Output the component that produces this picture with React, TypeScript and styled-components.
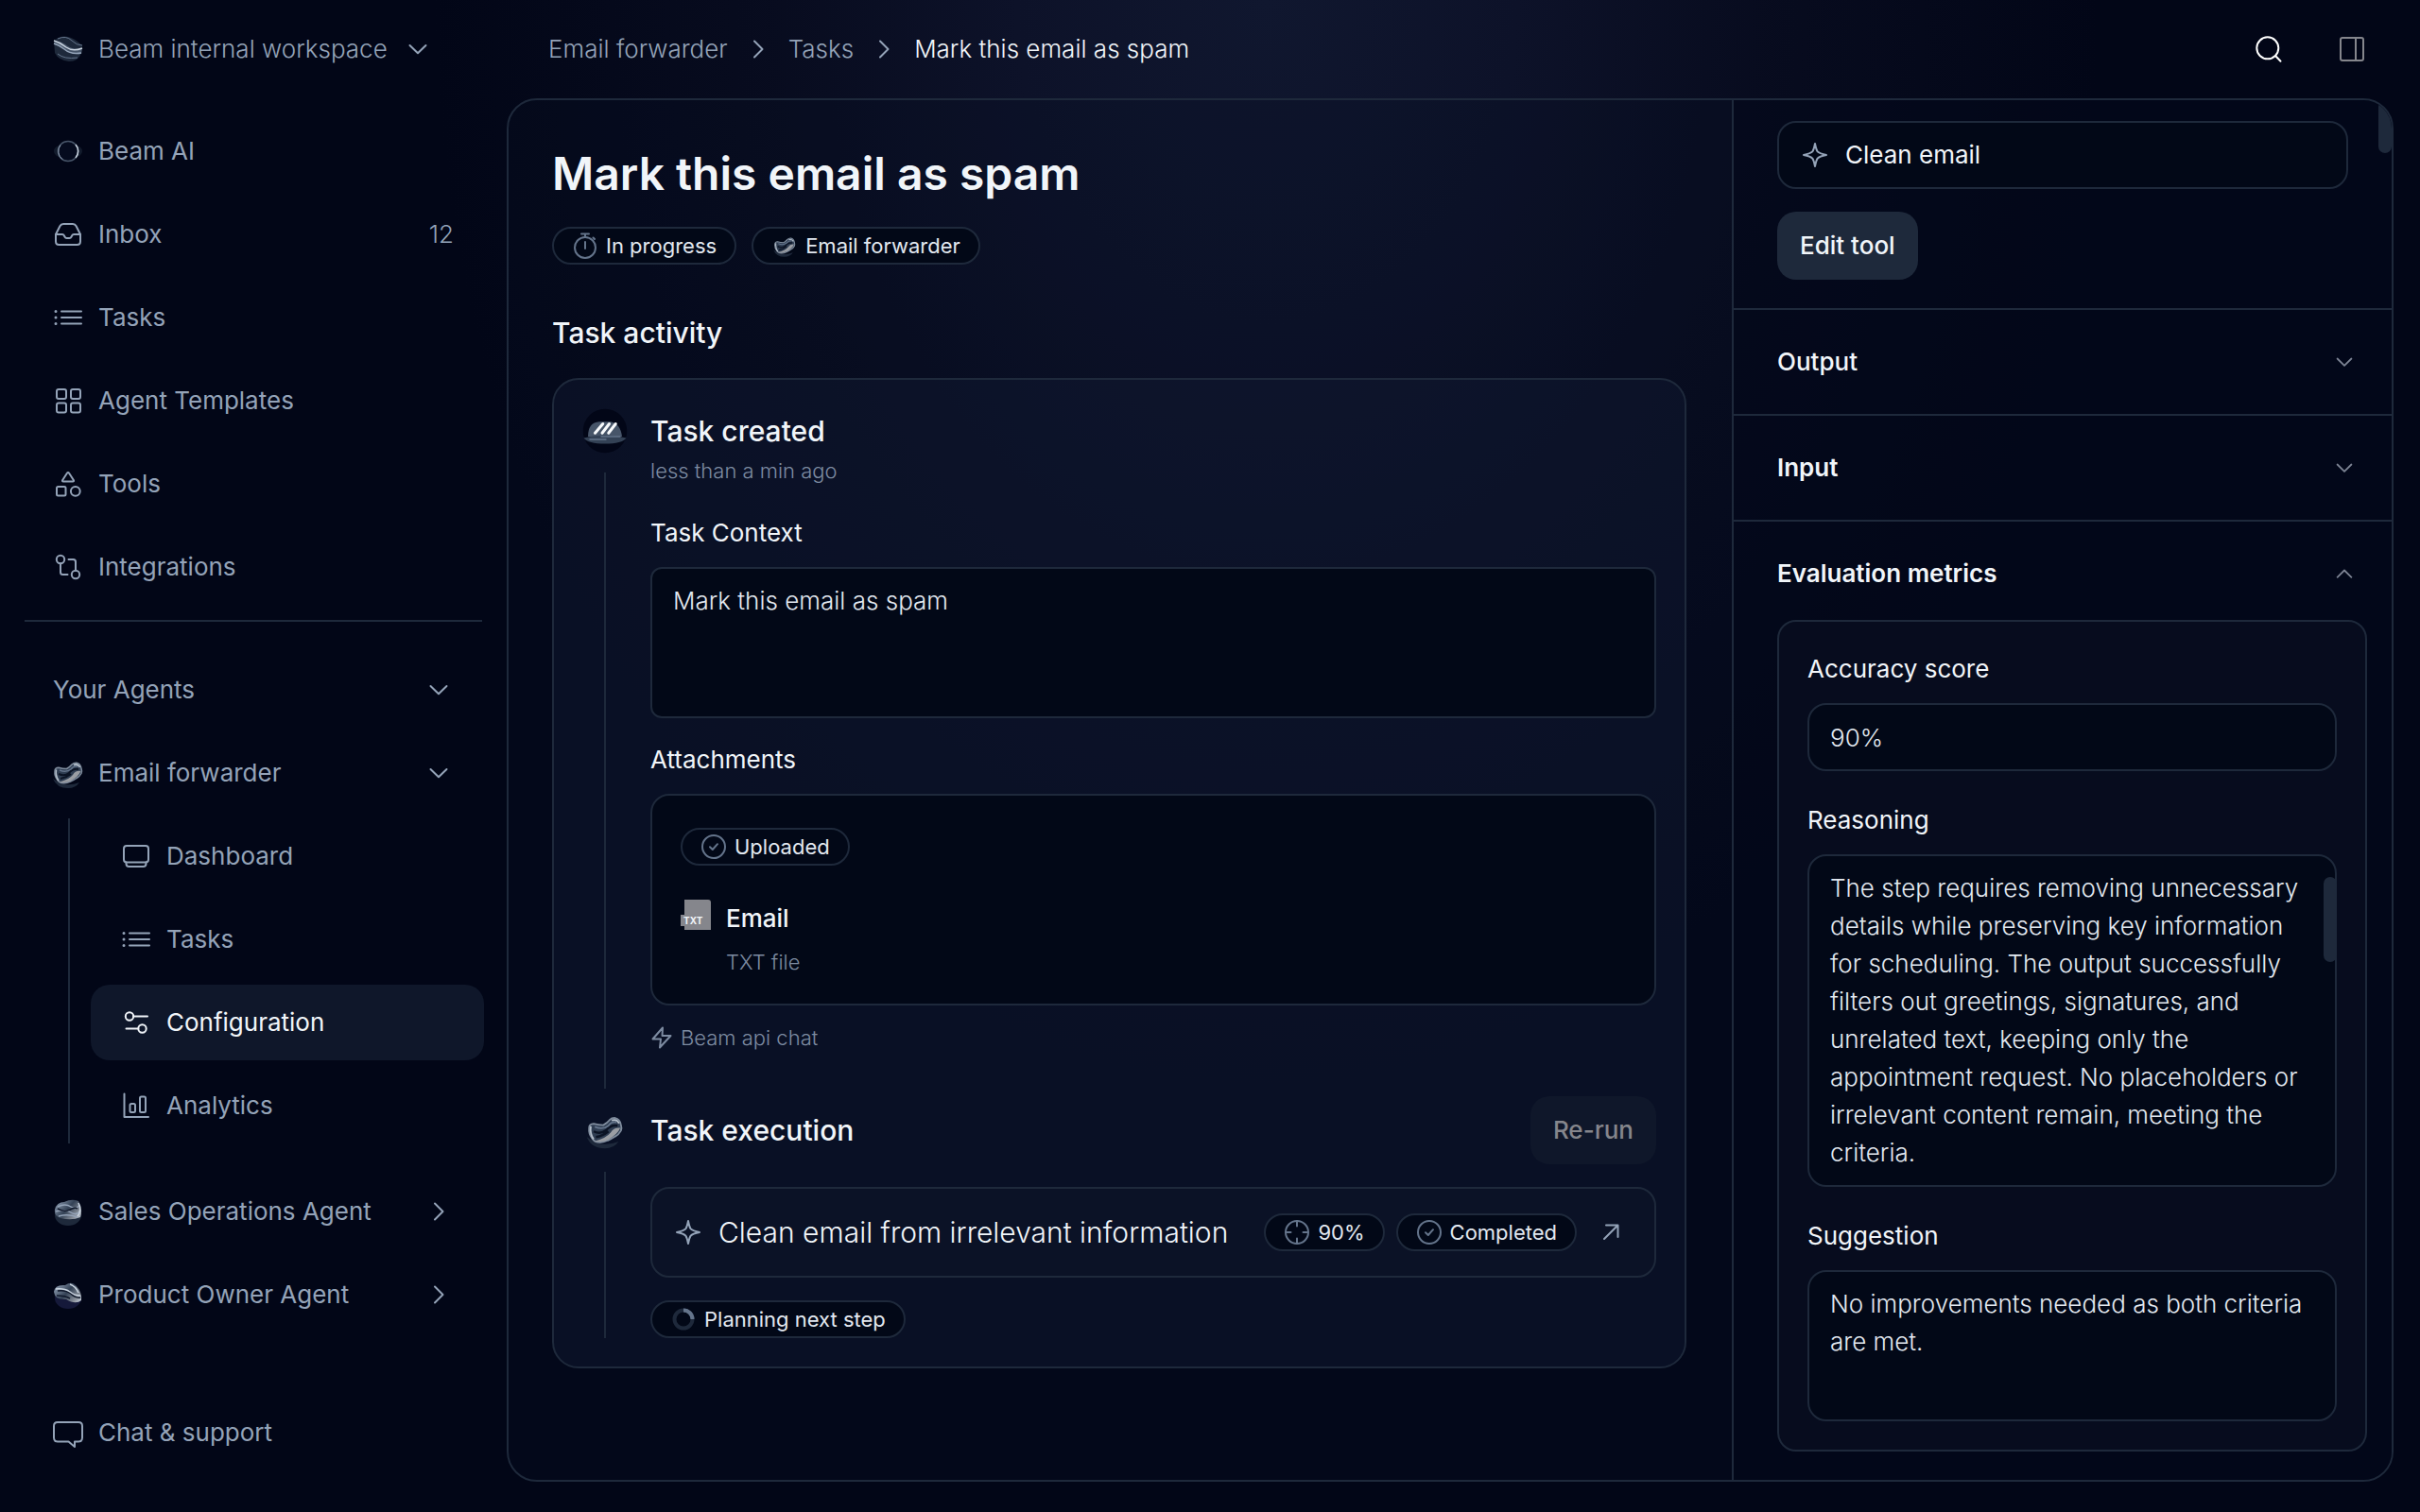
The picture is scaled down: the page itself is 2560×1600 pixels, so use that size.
import React, { useId } from "react";
import styled, { createGlobalStyle, css } from "styled-components";

const c = {
  page: "#020617",
  line: "#1e293b",
  muted: "#94a3b8",
  text: "#f1f5f9",
  soft: "#e2e8f0",
  field: "#020817",
};

const GlobalStyle = createGlobalStyle`
  *, *::before, *::after { box-sizing: border-box; }
  body {
    margin: 0;
    background: ${c.page};
    color: ${c.text};
    font-family: Inter, "Liberation Sans", sans-serif;
    font-size: 26px;
    line-height: 40px;
    -webkit-font-smoothing: antialiased;
  }
  h1, h2, h3, p, ul, ol { margin: 0; padding: 0; }
  ul, ol { list-style: none; }
  a { color: inherit; text-decoration: none; }
  button, input, textarea { font: inherit; color: inherit; }
  button { display: block; background: none; border: 0; padding: 0; cursor: pointer; text-align: left; }
  svg { display: block; flex: none; }
`;

/* ---------- icons ---------- */

type IconProps = { size?: number; box?: number; children: React.ReactNode };

const Icon = ({ size = 32, box = 32, children }: IconProps) => (
  <svg
    width={size}
    height={size}
    viewBox={`0 0 ${box} ${box}`}
    fill="none"
    stroke="currentColor"
    strokeWidth={2}
    strokeLinecap="round"
    strokeLinejoin="round"
    aria-hidden="true"
  >
    {children}
  </svg>
);

const InboxIcon = () => (
  <Icon>
    <path d="M3 16 7.4 7.2Q8.5 5 11 5H21Q23.5 5 24.6 7.2L29 16V23.5Q29 27 25.5 27H6.5Q3 27 3 23.5Z" />
    <path d="M3 16H10Q11.2 16 11.8 17.2L12.6 18.8Q13.2 20 14.4 20H17.6Q18.8 20 19.4 18.8L20.2 17.2Q20.8 16 22 16H29" />
  </Icon>
);
const ListIcon = () => (
  <Icon>
    <path d="M9 9.5H30M9 16H30M9 22.5H30" />
    <path d="M3 9.5h.01M3 16h.01M3 22.5h.01" strokeWidth={3} />
  </Icon>
);
const GridIcon = () => (
  <Icon>
    <rect x="4" y="4" width="10" height="10" rx="2" />
    <rect x="19" y="4" width="10" height="10" rx="2" />
    <rect x="4" y="18.5" width="10" height="10" rx="2" />
    <rect x="19" y="18.5" width="10" height="10" rx="2" />
  </Icon>
);
const ShapesIcon = () => (
  <Icon>
    <path d="M14.9 4.8Q16 3 17.1 4.8L21.8 12Q22.6 13.5 21 13.5H11Q9.4 13.5 10.2 12Z" />
    <rect x="4" y="19" width="9.5" height="9.5" rx="1.5" />
    <circle cx="23.8" cy="23.8" r="4.9" />
  </Icon>
);
const FlowIcon = () => (
  <Icon>
    <circle cx="8" cy="8" r="4.2" />
    <path d="M8 12.2V21.5Q8 24 10.5 24H15.5" />
    <circle cx="24" cy="24" r="4.2" />
    <path d="M24 19.8V10.5Q24 8 21.5 8H16.5" />
  </Icon>
);
const ScreenIcon = () => (
  <Icon>
    <rect x="3" y="5" width="26" height="17.5" rx="3" />
    <path d="M5.5 22.5V24Q5.5 27 8.5 27H23.5Q26.5 27 26.5 24V22.5" />
  </Icon>
);
const SlidersIcon = () => (
  <Icon>
    <circle cx="9" cy="9.5" r="4.2" />
    <path d="M13.2 9.5H28" />
    <circle cx="22.5" cy="22.5" r="4.2" />
    <path d="M5.5 22.5H18.3" />
  </Icon>
);
const BarsIcon = () => (
  <Icon>
    <path d="M3.5 3.5V28H29" />
    <rect x="9.5" y="14" width="5.5" height="9" rx="1.5" />
    <rect x="20" y="6.5" width="6" height="16.5" rx="1.5" />
  </Icon>
);
const ChatIcon = () => (
  <Icon>
    <path d="M5 5H27Q31 5 31 9V21.5Q31 25.5 27 25.5H23V31L16.5 25.5H5Q1 25.5 1 21.5V9Q1 5 5 5Z" />
  </Icon>
);
const ChevronDown = ({ size = 32 }: { size?: number }) => (
  <Icon size={size}>
    <path d="M7.5 12 16 20.3 24.5 12" />
  </Icon>
);
const ChevronUp = ({ size = 32 }: { size?: number }) => (
  <Icon size={size}>
    <path d="M7.5 20.3 16 12 24.5 20.3" />
  </Icon>
);
const ChevronRight = () => (
  <Icon>
    <path d="M12 7.5 20.5 16 12 24.5" />
  </Icon>
);
const SearchIcon = () => (
  <Icon>
    <circle cx="14.8" cy="14.8" r="11.5" />
    <path d="M23 23 28.5 28.7" />
  </Icon>
);
const SidePanelIcon = () => (
  <Icon>
    <rect x="4" y="4" width="24" height="24" rx="2" />
    <path d="M20 4V28" />
  </Icon>
);
const SparkleIcon = () => (
  <Icon>
    <path d="M16 4Q17.300 10.500 18.700 12.400 20.500 14.400 28 16 20.500 17.600 18.700 19.600 17.300 21.500 16 28 14.700 21.500 13.300 19.600 11.500 17.600 4 16 11.500 14.400 13.300 12.400 14.700 10.500 16 4Z" />
  </Icon>
);
const TimerIcon = () => (
  <Icon size={28} box={28}>
    <circle cx="14" cy="16" r="11" />
    <path d="M14 10V17M10 1.5H18M14 1.5V5M22.5 5.5 24 7" />
  </Icon>
);
const CheckIcon = () => (
  <Icon size={28} box={28}>
    <circle cx="14" cy="14" r="12" />
    <path d="M10 14.3 12.8 17 18 11.2" />
  </Icon>
);
const TargetIcon = () => (
  <Icon size={28} box={28}>
    <circle cx="14" cy="14" r="12" />
    <path d="M14 2V7.5M14 20.5V26M2 14H7.5M20.5 14H26" />
  </Icon>
);
const SpinnerIcon = () => (
  <Icon size={28} box={28}>
    <circle cx="14" cy="14" r="9.5" stroke="#1e293b" strokeWidth={4} />
    <path d="M14 4.5A9.5 9.5 0 0 1 23.5 14" stroke="#64748b" strokeWidth={4} strokeLinecap="butt" />
  </Icon>
);
const BoltIcon = () => (
  <Icon size={24} box={24}>
    <path d="M13 1.5 2.5 13.5H11L10 22.5 21.5 10H12.5Z" />
  </Icon>
);
const ArrowIcon = () => (
  <Icon>
    <path d="M9 23 23.5 8.5M11 8.5H23.5V21" />
  </Icon>
);

/* ---------- agent avatars ---------- */

type BlobKind = "wave" | "eclipse" | "bean" | "knot" | "fold" | "dome";

const Blob = ({ kind, size = 32, inset = 0 }: { kind: BlobKind; size?: number; inset?: number }) => {
  const id = useId();
  const metal = `url(#${id})`;
  const span = 32 + inset * 2;
  return (
    <svg width={size} height={size} viewBox={`${-inset} ${-inset} ${span} ${span}`} fill="none" aria-hidden="true">
      <defs>
        <linearGradient id={id} x1="4" y1="4" x2="28" y2="26" gradientUnits="userSpaceOnUse">
          <stop offset="0" stopColor="#94a3b8" />
          <stop offset="0.450" stopColor="#334155" />
          <stop offset="0.800" stopColor="#8b929c" />
          <stop offset="1" stopColor="#cbd5e1" />
        </linearGradient>
      </defs>
      {kind === "wave" && (
        <>
          <path d="M1 7Q8 1 16 3 22 4 31 12L30 20Q27 29 17 29 6 28 2 20Z" fill="#1e293b" />
          <path d="M2 7Q10 8 16 13 22 17 31 15L30 21Q20 22 13 17 7 12 1 11Z" fill="#475569" />
          <path d="M1 7Q8 9 14 14 21 19 31 15" stroke="#cbd5e1" strokeWidth="1.500" />
          <path d="M1 10Q7 12 12 16 19 22 30 20" stroke="#94a3b8" strokeWidth="1.500" />
          <path d="M5 5Q14 1 20 7 25 12 31 12M5 21Q12 27 26 25" stroke="#64748b" />
        </>
      )}
      {kind === "eclipse" && (
        <>
          <ellipse cx="16" cy="16" rx="15" ry="8" fill="#1e293b" opacity="0.600" />
          <circle cx="16" cy="16" r="10.500" fill="#050b1e" stroke="#475569" strokeWidth="1.500" />
          <path d="M24 9A10.500 10.500 0 0 1 24 23" stroke="#cbd5e1" strokeWidth="1.500" />
          <path d="M10 24.500A10.500 10.500 0 0 1 8 9.500" stroke="#94a3b8" />
        </>
      )}
      {kind === "bean" && (
        <>
          <path d="M0 22Q4 32 16 32 24 32 28 26 18 30 8 27Z" fill="#1e293b" />
          <path
            d="M2 14Q2 10.500 6 10.300 10 11.500 14.500 11.500 18 9.500 20 7 22 5 25 5.200 29 6 30 11 31 14 30 16.500 28 20 25 21.500 22 23.500 18.500 25 15 26.700 12 26.700 7 27 4.500 23 1.500 19 2 14Z"
            fill="#2f3d52"
            stroke="#7f8c9d"
            strokeWidth="1.500"
          />
          <path d="M29.500 14Q27 20 18.500 24.500 13 27 7 25.500 17 23 21 18 24 13 29.500 14Z" fill="#9a9da3" />
          <path d="M6 17Q12 20 17 16 21 11 27 12M8 22Q14 21 19 17" stroke="#0b1324" strokeWidth="2" />
          <path d="M7 13Q14 16 19 12 22 8 26 9" stroke="#64748b" strokeWidth="1.500" />
          <path d="M3.500 12.500Q2.500 19 6 24M22 7.500Q26 5.500 28.500 10" stroke="#b6c0cc" strokeWidth="1.500" />
        </>
      )}
      {kind === "knot" && (
        <>
          <ellipse cx="16" cy="20" rx="14" ry="11" fill="#1e293b" />
          <path d="M2 14Q4 6 12 6 20 2 27 5 32 13 29 22 20 26 8 23 1 21 2 14Z" fill={metal} />
          <path d="M5 11Q13 7 19 11T28 9M3 16Q13 13 19 17T29 15M6 21Q16 18 26 22" stroke="#94a3b8" strokeWidth="1.500" />
          <path d="M5 13Q12 17 18 14 23 11 26 13" stroke="#0f172a" strokeWidth="1.500" />
          <path d="M27 7Q31 15 26 21" stroke="#cbd5e1" strokeWidth="1.500" />
        </>
      )}
      {kind === "fold" && (
        <>
          <ellipse cx="16" cy="20" rx="14" ry="11" fill="#15193a" />
          <path d="M1 13Q2 5 13 6 20 1 25 7 31 14 30 22 24 27 14 21 2 22 1 13Z" fill={metal} />
          <path d="M5 12Q14 11 19 15 24 20 29 19M4 17Q13 17 18 20" stroke="#0f172a" strokeWidth="1.500" />
          <path d="M3 10Q12 9 18 13 23 17 29 17M18 5Q24 7 27 14" stroke="#cbd5e1" strokeWidth="1.500" />
        </>
      )}
      {kind === "dome" && (
        <>
          <circle cx="16" cy="16" r="15.500" fill="#020617" />
          <path d="M4 20Q4 10 12 9.500L20 9.500Q27 11 28 20Z" fill="#475569" />
          <path d="M1 21Q16 17 31 21 28 25 16 25 4 25 1 21Z" fill="#334155" />
          <path d="M5 22H17M13 20H27" stroke="#64748b" />
          <path d="M9 17.500 14.500 11M14 17.500 19 11M18.500 17.500 23.500 11" stroke="#f8fafc" strokeWidth="2" strokeLinecap="round" />
        </>
      )}
    </svg>
  );
};

/* ---------- shell ---------- */

const Shell = styled.div`
  display: flex;
  height: 100vh;
  background:
    radial-gradient(ellipse 880px 1150px at 1340px 0, #10172f 0%, #0d1229 30%, rgba(10, 14, 34, 0.700) 60%, rgba(2, 6, 23, 0) 100%),
    ${c.page};
`;

const Sidebar = styled.aside`
  display: flex;
  flex-direction: column;
  flex: none;
  width: 536px;
  padding: 0 24px 44px;
  color: ${c.muted};
`;

const Workspace = styled.button`
  display: flex;
  align-items: center;
  gap: 16px;
  height: 104px;
  margin-bottom: 16px;
  padding: 0 32px;
`;

const NavList = styled.ul`
  display: flex;
  flex-direction: column;
  gap: 8px;
`;

const rowStyle = css<{ $active?: boolean }>`
  display: flex;
  align-items: center;
  gap: 16px;
  width: 100%;
  height: 80px;
  padding: 0 32px;
  border-radius: 20px;
  background: ${(p) => (p.$active ? "#0f172a" : "transparent")};
  color: ${(p) => (p.$active ? c.text : "inherit")};
`;
const NavLink = styled.a<{ $active?: boolean }>`
  ${rowStyle}
`;
const NavButton = styled.button<{ $active?: boolean }>`
  ${rowStyle}
`;
const Grow = styled.span`
  flex: 1;
  white-space: nowrap;
`;
const Light = styled.span`
  font-weight: 300;
`;

const Divider = styled.hr`
  width: calc(100% - 4px);
  height: 2px;
  margin: 16px 2px 32px;
  border: 0;
  background: ${c.line};
`;

const SubNav = styled(NavList)`
  margin: 8px 0 32px 48px;
  padding-left: 22px;
  border-left: 2px solid ${c.line};
`;

const SidebarFoot = styled.div`
  margin-top: auto;
`;

const Content = styled.div`
  display: flex;
  flex: 1;
  flex-direction: column;
  min-width: 0;
  padding: 0 28px 32px 0;
`;

const TopBar = styled.header`
  display: flex;
  align-items: center;
  justify-content: space-between;
  height: 104px;
  padding: 0 28px 0 44px;
`;
const Crumbs = styled.ol`
  display: flex;
  align-items: center;
  gap: 16px;
  color: ${c.muted};
  font-weight: 300;
  li {
    display: flex;
    align-items: center;
    gap: 16px;
  }
  [aria-current] {
    color: ${c.text};
  }
`;
const Tools = styled.div`
  display: flex;
  gap: 56px;
`;
const IconButton = styled.button<{ $dim?: boolean }>`
  color: ${(p) => (p.$dim ? "#85868c" : "#ffffff")};
`;

const Panel = styled.div`
  display: flex;
  flex: 1;
  min-height: 0;
  border: 2px solid ${c.line};
  border-radius: 32px;
  overflow: hidden;
  background: rgba(8, 16, 36, 0.250);
`;

/* ---------- shared parts ---------- */

const Chip = styled.span`
  display: flex;
  align-items: center;
  gap: 8px;
  width: fit-content;
  height: 40px;
  padding: 0 19px;
  border: 2px solid ${c.line};
  border-radius: 20px;
  background: ${c.field};
  color: ${c.soft};
  font-size: 22px;
  line-height: 36px;
  white-space: nowrap;
  svg {
    color: #64748b;
  }
`;

const Button = styled.button<{ $faded?: boolean }>`
  height: 72px;
  padding: 0 24px;
  border-radius: 20px;
  background: ${(p) => (p.$faded ? "#0f172a" : c.line)};
  color: ${(p) => (p.$faded ? "#85868c" : c.text)};
  font-weight: 500;
  white-space: nowrap;
`;

const fieldStyle = css`
  display: block;
  width: 100%;
  border: 2px solid ${c.line};
  border-radius: 20px;
  background: ${c.field};
  color: ${c.soft};
  font-weight: 300;
  outline: 0;
`;
const TextArea = styled.textarea<{ $tight?: boolean }>`
  ${fieldStyle}
  height: 160px;
  padding: 14px 22px;
  border-radius: ${(p) => (p.$tight ? "12px" : "20px")};
  resize: none;
  overflow: hidden;
`;
const LongText = styled(TextArea)`
  height: 352px;
  padding-right: 16px;
`;
const Input = styled.input`
  ${fieldStyle}
  height: 72px;
  padding: 0 22px;
`;

/* ---------- task column ---------- */

const Main = styled.main`
  flex: 1;
  min-width: 0;
  padding: 46px 48px 32px 46px;
`;
const Title = styled.h1`
  font-size: 48px;
  font-weight: 600;
  line-height: 64px;
`;
const Chips = styled.div`
  display: flex;
  gap: 16px;
  margin: 24px 0 48px;
`;
const Heading = styled.h2`
  font-size: 30px;
  font-weight: 500;
  line-height: 48px;
`;
const Card = styled.section`
  display: flex;
  flex-direction: column;
  gap: 8px;
  margin-top: 24px;
  padding: 30px;
  border: 2px solid ${c.line};
  border-radius: 28px;
  background: rgba(15, 23, 48, 0.500);
`;
const Event = styled.article`
  display: flex;
  gap: 24px;
`;
const Rail = styled.div<{ $low?: boolean }>`
  display: flex;
  flex: none;
  flex-direction: column;
  align-items: center;
  gap: 20px;
  width: 48px;
  padding-top: ${(p) => (p.$low ? "12px" : "0")};
  &::after {
    content: "";
    flex: 1;
    width: 2px;
    background: ${c.line};
  }
`;
const EventBody = styled.div<{ $gapBelow?: boolean }>`
  flex: 1;
  min-width: 0;
  padding-bottom: ${(p) => (p.$gapBelow ? "36px" : "0")};
`;
const EventTitle = styled.h3`
  font-size: 30px;
  font-weight: 500;
  line-height: 48px;
`;
const Meta = styled.p`
  display: flex;
  align-items: center;
  gap: 8px;
  color: #7d8ba1;
  font-size: 22px;
  font-weight: 300;
  line-height: 36px;
`;
const Label = styled.label`
  display: block;
  margin: 24px 0 16px;
`;
const FirstLabel = styled(Label)`
  margin-top: 28px;
`;
const Attachments = styled.div`
  margin-bottom: 16px;
  padding: 34px 30px 26px;
  border: 2px solid ${c.line};
  border-radius: 20px;
  background: ${c.field};
`;
const File = styled.div`
  display: flex;
  gap: 16px;
  margin-top: 36px;
  font-weight: 500;
  ${Meta} {
    margin-top: 8px;
  }
`;
const FileBadge = styled.span`
  display: flex;
  align-items: center;
  width: 32px;
  height: 32px;
  padding: 12px 0 0 3px;
  background:
    linear-gradient(#85868c, #85868c) 0 16px / 4px 12px no-repeat,
    linear-gradient(#85868c, #85868c) 4px 0 / 28px 32px no-repeat;
  border-top-right-radius: 3px;
  font-size: 10px;
  font-weight: 700;
  line-height: 20px;
`;
const Spread = styled.div`
  display: flex;
  align-items: center;
  justify-content: space-between;
`;
const Step = styled.a`
  display: flex;
  align-items: center;
  gap: 12px;
  height: 96px;
  margin: 24px 0;
  padding: 0 30px 0 22px;
  border: 2px solid ${c.line};
  border-radius: 20px;
  background: #0b1226;
  color: ${c.muted};
`;
const StepTitle = styled.span`
  flex: 1;
  margin-left: 4px;
  overflow: hidden;
  color: ${c.text};
  font-size: 30px;
  font-weight: 300;
  white-space: nowrap;
`;
const StepArrow = styled.span`
  margin-left: 8px;
`;

/* ---------- details column ---------- */

const Details = styled.aside`
  position: relative;
  display: flex;
  flex: none;
  flex-direction: column;
  justify-content: flex-end;
  width: 698px;
  border-left: 2px solid ${c.line};
  overflow: hidden;
  background: rgba(2, 6, 23, 0.500);
`;
const Thumb = styled.span<{ $top: number; $height: number }>`
  position: absolute;
  top: ${(p) => p.$top}px;
  right: 0;
  width: 14px;
  height: ${(p) => p.$height}px;
  border-radius: 7px;
  background: ${c.line};
`;
const ToolSection = styled.section`
  padding: 0 46px 30px;
`;
const ToolLabel = styled.label`
  display: block;
  margin-bottom: 16px;
`;
const ToolField = styled.div`
  display: flex;
  align-items: center;
  gap: 16px;
  height: 72px;
  margin-bottom: 24px;
  padding: 0 22px;
  border: 2px solid ${c.line};
  border-radius: 20px;
  background: ${c.field};
  color: ${c.muted};
  input {
    flex: 1;
    min-width: 0;
    padding: 0;
    border: 0;
    background: none;
    color: ${c.text};
    outline: 0;
  }
`;
const Accordion = styled.button<{ $weight: number }>`
  display: flex;
  align-items: center;
  justify-content: space-between;
  flex: none;
  height: 112px;
  padding: 0 36px 0 46px;
  border-top: 2px solid ${c.line};
  font-weight: ${(p) => p.$weight};
  svg {
    color: #7d8494;
  }
`;
const Metrics = styled.section`
  flex: none;
  margin: -6px 26px 30px 46px;
  padding: 0 30px 30px;
  border: 2px solid ${c.line};
  border-radius: 20px;
  background: #070c1e;
`;
const MetricLabel = styled.label`
  display: block;
  padding: 32px 0 16px;
  &:first-child {
    padding-top: 30px;
  }
`;
const Scrollable = styled.div`
  position: relative;
`;

const topNav = [
  { label: "Beam AI", icon: <Blob kind="eclipse" /> },
  { label: "Inbox", icon: <InboxIcon />, count: 12 },
  { label: "Tasks", icon: <ListIcon /> },
  { label: "Agent Templates", icon: <GridIcon /> },
  { label: "Tools", icon: <ShapesIcon /> },
  { label: "Integrations", icon: <FlowIcon /> },
];

const agentNav = [
  { label: "Dashboard", icon: <ScreenIcon /> },
  { label: "Tasks", icon: <ListIcon /> },
  { label: "Configuration", icon: <SlidersIcon />, active: true },
  { label: "Analytics", icon: <BarsIcon /> },
];

const reasoning =
  "The step requires removing unnecessary details while preserving key information for scheduling. The output successfully filters out greetings, signatures, and unrelated text, keeping only the appointment request. No placeholders or irrelevant content remain, meeting the criteria.";

export default function App() {
  return (
    <>
      <GlobalStyle />
      <Shell>
        <Sidebar>
          <Workspace>
            <Blob kind="wave" />
            <Light>Beam internal workspace</Light>
            <ChevronDown />
          </Workspace>
          <nav aria-label="Main">
            <NavList>
              {topNav.map((item) => (
                <li key={item.label}>
                  <NavLink href="#">
                    {item.icon}
                    <Grow>{item.label}</Grow>
                    {item.count && <Light>{item.count}</Light>}
                  </NavLink>
                </li>
              ))}
            </NavList>
          </nav>
          <Divider />
          <nav aria-label="Agents">
            <NavList>
              <li>
                <NavButton>
                  <Grow>Your Agents</Grow>
                  <ChevronDown />
                </NavButton>
              </li>
              <li>
                <NavButton aria-expanded="true">
                  <Blob kind="bean" />
                  <Grow>Email forwarder</Grow>
                  <ChevronDown />
                </NavButton>
              </li>
            </NavList>
            <SubNav>
              {agentNav.map((item) => (
                <li key={item.label}>
                  <NavLink href="#" $active={item.active}>
                    {item.icon}
                    <Grow>{item.label}</Grow>
                  </NavLink>
                </li>
              ))}
            </SubNav>
            <NavList>
              <li>
                <NavButton>
                  <Blob kind="knot" />
                  <Grow>Sales Operations Agent</Grow>
                  <ChevronRight />
                </NavButton>
              </li>
              <li>
                <NavButton>
                  <Blob kind="fold" />
                  <Grow>Product Owner Agent</Grow>
                  <ChevronRight />
                </NavButton>
              </li>
            </NavList>
          </nav>
          <SidebarFoot>
            <NavLink href="#">
              <ChatIcon />
              <Grow>Chat &amp; support</Grow>
            </NavLink>
          </SidebarFoot>
        </Sidebar>

        <Content>
          <TopBar>
            <nav aria-label="Breadcrumb">
              <Crumbs>
                <li>
                  <a href="#">Email forwarder</a>
                  <ChevronRight />
                </li>
                <li>
                  <a href="#">Tasks</a>
                  <ChevronRight />
                </li>
                <li aria-current="page">Mark this email as spam</li>
              </Crumbs>
            </nav>
            <Tools>
              <IconButton aria-label="Search">
                <SearchIcon />
              </IconButton>
              <IconButton $dim aria-label="Toggle details">
                <SidePanelIcon />
              </IconButton>
            </Tools>
          </TopBar>

          <Panel>
            <Main>
              <Title>Mark this email as spam</Title>
              <Chips>
                <Chip>
                  <TimerIcon />
                  In progress
                </Chip>
                <Chip>
                  <Blob kind="bean" size={28} inset={3} />
                  Email forwarder
                </Chip>
              </Chips>
              <Heading>Task activity</Heading>
              <Card>
                <Event>
                  <Rail>
                    <Blob kind="dome" size={48} />
                  </Rail>
                  <EventBody $gapBelow>
                    <EventTitle>Task created</EventTitle>
                    <Meta>less than a min ago</Meta>
                    <FirstLabel htmlFor="context">Task Context</FirstLabel>
                    <TextArea id="context" $tight defaultValue="Mark this email as spam" />
                    <Label as="p">Attachments</Label>
                    <Attachments>
                      <Chip>
                        <CheckIcon />
                        Uploaded
                      </Chip>
                      <File>
                        <FileBadge>TXT</FileBadge>
                        <div>
                          <p>Email</p>
                          <Meta>TXT file</Meta>
                        </div>
                      </File>
                    </Attachments>
                    <Meta>
                      <BoltIcon />
                      Beam api chat
                    </Meta>
                  </EventBody>
                </Event>
                <Event>
                  <Rail $low>
                    <Blob kind="bean" size={48} inset={4} />
                  </Rail>
                  <EventBody>
                    <Spread>
                      <EventTitle>Task execution</EventTitle>
                      <Button $faded>Re-run</Button>
                    </Spread>
                    <Step href="#">
                      <SparkleIcon />
                      <StepTitle>Clean email from irrelevant information</StepTitle>
                      <Chip>
                        <TargetIcon />
                        90%
                      </Chip>
                      <Chip>
                        <CheckIcon />
                        Completed
                      </Chip>
                      <StepArrow>
                        <ArrowIcon />
                      </StepArrow>
                    </Step>
                    <Chip>
                      <SpinnerIcon />
                      Planning next step
                    </Chip>
                  </EventBody>
                </Event>
              </Card>
            </Main>

            <Details>
              <ToolSection>
                <ToolLabel htmlFor="tool">App</ToolLabel>
                <ToolField>
                  <SparkleIcon />
                  <input id="tool" defaultValue="Clean email" />
                </ToolField>
                <Button>Edit tool</Button>
              </ToolSection>
              <Accordion $weight={500}>
                Output
                <ChevronDown size={28} />
              </Accordion>
              <Accordion $weight={600}>
                Input
                <ChevronDown size={28} />
              </Accordion>
              <Accordion $weight={600} aria-expanded="true">
                Evaluation metrics
                <ChevronUp size={28} />
              </Accordion>
              <Metrics>
                <MetricLabel htmlFor="score">Accuracy score</MetricLabel>
                <Input id="score" defaultValue="90%" />
                <MetricLabel htmlFor="reasoning">Reasoning</MetricLabel>
                <Scrollable>
                  <LongText id="reasoning" defaultValue={reasoning} />
                  <Thumb $top={24} $height={90} />
                </Scrollable>
                <MetricLabel htmlFor="suggestion">Suggestion</MetricLabel>
                <TextArea id="suggestion" defaultValue="No improvements needed as both criteria are met." />
              </Metrics>
              <Thumb $top={0} $height={56} />
            </Details>
          </Panel>
        </Content>
      </Shell>
    </>
  );
}
